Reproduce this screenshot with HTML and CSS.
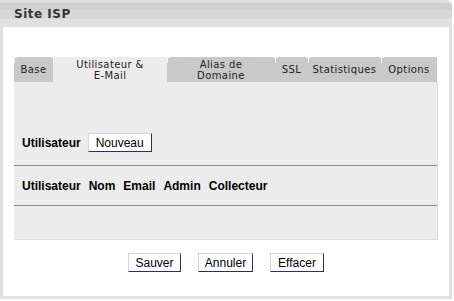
FILE: index.html
```html
<!DOCTYPE html>
<html>
  <head>
    <meta charset="UTF-8">
    <title>Site ISP</title>
    <link rel="stylesheet" href="styles.css">
  </head>
  <body>
    <div class="box">
      <div class="box-title">Site ISP</div>

      <div class="tabs">
        <div class="tab tab-base">Base</div>
        <div class="tab tab-user active">Utilisateur &amp;<br>E-Mail</div>
        <div class="tab tab-alias">Alias de<br>Domaine</div>
        <div class="tab tab-ssl">SSL</div>
        <div class="tab tab-stats">Statistiques</div>
        <div class="tab tab-options">Options</div>
      </div>

      <div class="panel">
        <div class="user-row">
          <span class="label">Utilisateur</span>
          <button class="btn btn-new">Nouveau</button>
        </div>
        <div class="head-row">
          <span>Utilisateur</span>
          <span>Nom</span>
          <span>Email</span>
          <span>Admin</span>
          <span>Collecteur</span>
        </div>
      </div>

      <div class="actions">
        <button class="btn btn-save">Sauver</button>
        <button class="btn btn-cancel">Annuler</button>
        <button class="btn btn-clear">Effacer</button>
      </div>
    </div>
  </body>
</html>
```

FILE: styles.css
```css
body {
  margin: 0;
  background: #fff;
  font-family: "Liberation Sans", Arial, sans-serif;
  font-size: 12px;
  color: #000;
}

/* cadre principal */
.box {
  width: 446px;
  height: 296px;
  border: 3px solid #e0e0e0;
  border-top: 0;
  border-top-right-radius: 6px;
}

.box-title {
  margin: 0 -3px;
  height: 27px;
  padding-left: 14px;
  box-sizing: border-box;
  border-top-right-radius: 6px;
  background: linear-gradient(to bottom,
    #dcdcdc 0, #dcdcdc 3px,
    #cfcfcf 3px, #cfcfcf 10px,
    #d7d7d7 10px, #d7d7d7 19px,
    #e1e1e1 19px, #e1e1e1 27px);
  font-family: "DejaVu Sans", Verdana, sans-serif;
  font-weight: bold;
  font-size: 12px;
  letter-spacing: 0.5px;
  line-height: 28px;
  color: #333;
}

/* onglets */
.tabs {
  display: flex;
  margin: 30px 0 0 11px;
  width: 423px;
}

.tab {
  position: relative;
  height: 25px;
  background: #c9c9c9;
  font-family: "DejaVu Sans", Verdana, sans-serif;
  font-size: 10px;
  line-height: 11px;
  color: #222;
  text-align: center;
  display: flex;
  align-items: center;
  justify-content: center;
  letter-spacing: 0.4px;
}

.tab::before {
  content: "";
  position: absolute;
  left: 0;
  top: 0;
  width: 1px;
  height: 6px;
  background: #f4f4f4;
}

.tab::after {
  content: "";
  position: absolute;
  left: -2px;
  top: 0;
  width: 5px;
  height: 1px;
  background: #f4f4f4;
}

.tab.active {
  background: #ececec;
}

.tab-base { width: 39px; }
.tab-user { width: 114px; }
.tab-alias { width: 108px; }
.tab-ssl { width: 33px; }
.tab-stats { width: 73px; }
.tab-options { width: 56px; }

/* contenu de l'onglet */
.panel {
  margin-left: 11px;
  width: 423px;
  height: 157px;
  background: #ececec;
  border-right: 1px solid #dedede;
  border-bottom: 1px solid #dedede;
}

.user-row {
  display: flex;
  align-items: center;
  padding: 51px 0 0 8px;
  height: 19px;
}

.label {
  font-weight: bold;
  margin-right: 7px;
}

.head-row {
  margin-top: 13px;
  border-top: 1px solid #888;
  border-bottom: 1px solid #888;
  height: 39px;
  display: flex;
  align-items: center;
  padding-left: 8px;
  font-weight: bold;
  gap: 8px;
}

/* boutons */
.btn {
  height: 19px;
  padding: 0;
  background: #fff;
  border: 1px solid;
  border-color: #d8d2e6 #2e2e5e #2e2e5e #d8d2e6;
  font-family: "Liberation Sans", Arial, sans-serif;
  font-size: 12px;
  color: #000;
}

.btn-new { width: 64px; }

.actions {
  display: flex;
  justify-content: center;
  gap: 17px;
  margin-top: 13px;
}

.btn-save { width: 53px; }
.btn-cancel { width: 55px; }
.btn-clear { width: 54px; }
```
